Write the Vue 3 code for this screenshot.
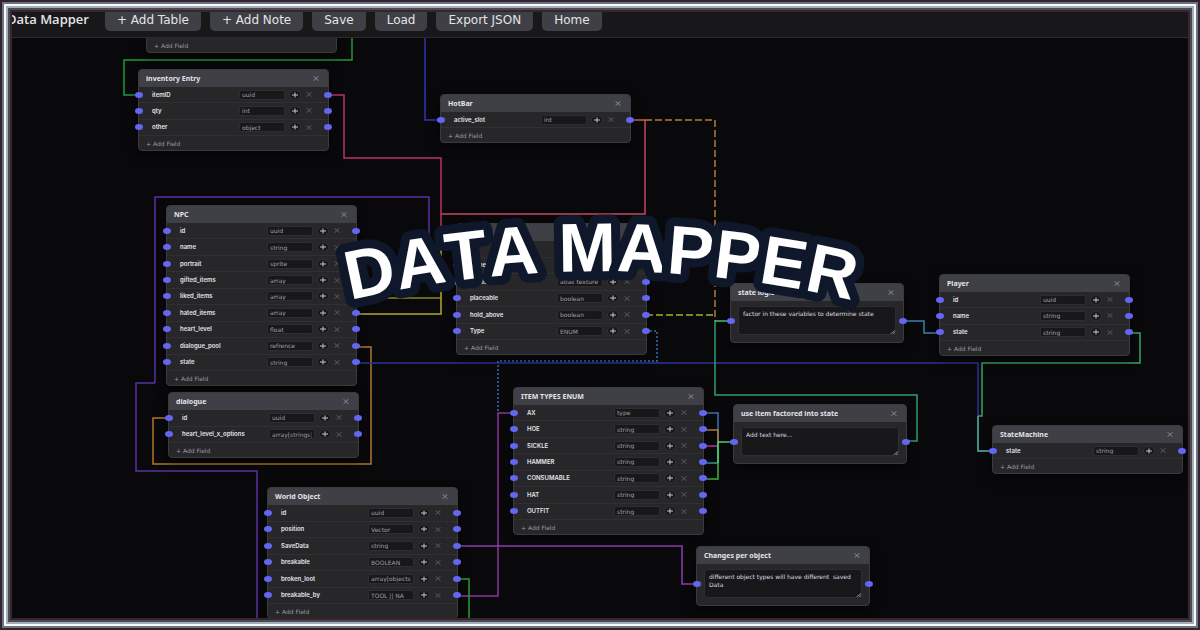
<script setup>
import { ref } from 'vue'

const actions = ['+ Add Table', '+ Add Note', 'Save', 'Load', 'Export JSON', 'Home']

const HEAD_AND_FOOT = 33
const ROW_PITCH = 16.5

const fields = (...pairs) => pairs.map(([name, type]) => ({ name, type }))

const tables = ref([
  { x: 146, y: 20, title: '', rows: [] },
  { x: 138, y: 69, title: 'inventory Entry', rows: fields(['itemID', 'uuid'], ['qty', 'int'], ['other', 'object']) },
  { x: 440, y: 94, title: 'HotBar', rows: fields(['active_slot', 'int']) },
  {
    x: 166, y: 205, title: 'NPC',
    rows: fields(
      ['id', 'uuid'], ['name', 'string'], ['portrait', 'sprite'], ['gifted_items', 'array'],
      ['liked_items', 'array'], ['hated_items', 'array'], ['heart_level', 'float'],
      ['dialogue_pool', 'refrence'], ['state', 'string']
    )
  },
  {
    x: 456, y: 223, title: '',
    rows: fields(['', ''], ['name', ''], ['sprite', 'atlas texture'], ['placeable', 'boolean'], ['hold_above', 'boolean'], ['Type', 'ENUM'])
  },
  { x: 939, y: 274, title: 'Player', rows: fields(['id', 'uuid'], ['name', 'string'], ['state', 'string']) },
  { x: 168, y: 392, title: 'dialogue', rows: fields(['id', 'uuid'], ['heart_level_x_options', 'array[strings]']) },
  {
    x: 513, y: 387, title: 'ITEM TYPES ENUM',
    rows: fields(
      ['AX', 'type'], ['HOE', 'string'], ['SICKLE', 'string'], ['HAMMER', 'string'],
      ['CONSUMABLE', 'string'], ['HAT', 'string'], ['OUTFIT', 'string']
    )
  },
  { x: 992, y: 425, title: 'StateMachine', rows: fields(['state', 'string']) },
  {
    x: 267, y: 487, title: 'World Object',
    rows: fields(
      ['id', 'uuid'], ['position', 'Vector'], ['SaveData', 'string'],
      ['breakable', 'BOOLEAN'], ['broken_loot', 'array[objects]'], ['breakable_by', 'TOOL || NA']
    )
  }
])

const notes = ref([
  { x: 730, y: 283, title: 'state logic', text: 'factor in these variables to determine state' },
  { x: 733, y: 404, title: 'use item factored into state', text: 'Add text here...' },
  { x: 696, y: 546, title: 'Changes per object', text: 'different object types will have different  saved Data' }
])

const wires = [
  { d: 'M352 30V60H124V95H138', c: '#22963a' },
  { d: 'M425 30V120H440', c: '#3234b0' },
  { d: 'M155 383V197H429V249H456', c: '#5a30a4' },
  { d: 'M155 383H136V471H257V640', c: '#5a30a4' },
  { d: 'M355 298H441', c: '#85862a' },
  { d: 'M355 314H441V249H456', c: '#b3a936' },
  { d: 'M328 95H344V158H441V249', c: '#b83564' },
  { d: 'M441 214H645V120', c: '#c04860' },
  { d: 'M630 120H645', c: '#b86a3c' },
  { d: 'M645 120H715V321', c: '#b37a3c', dash: '7 3' },
  { d: 'M646 315H715', c: '#a8b030', dash: '7 3' },
  { d: 'M355 347H371V464H153V418H168', c: '#b0762e' },
  { d: 'M355 363H978V451H993', c: '#2e309a' },
  { d: 'M646 331H657V361H498V413', c: '#3474b4', dash: '2 2' },
  { d: 'M513 413H498V596H457', c: '#86389c' },
  { d: 'M457 546H682V584H696', c: '#8f3cb0' },
  { d: 'M457 579H469V640', c: '#2f9a38' },
  { d: 'M906 441H917V395H715V321', c: '#2f9d72' },
  { d: 'M715 321H730', c: '#4cc070' },
  { d: 'M904 321H924V333H939', c: '#4080ac' },
  { d: 'M1129 333H1140V363H982V416H978', c: '#38a262' },
  { d: 'M978 416V451H993', c: '#4cae8c' },
  { d: 'M703 413H718V442', c: '#3c72a8' },
  { d: 'M703 430H718V442', c: '#b07f34' },
  { d: 'M703 446H718', c: '#c032a0' },
  { d: 'M703 463H718', c: '#2f9a94' },
  { d: 'M703 479H718V442', c: '#3fae44' },
  { d: 'M718 463V442H733', c: '#4fd07a' }
]

const at = (item) => ({ left: item.x + 'px', top: item.y + 'px' })
const tableBox = (t) => ({ ...at(t), height: Math.floor(HEAD_AND_FOOT + t.rows.length * ROW_PITCH) + 'px' })
</script>

<template>
  <main class="app">
    <header class="toolbar">
      <h1 class="brand">Data Mapper</h1>
      <button v-for="a in actions" :key="a" type="button" class="action">{{ a }}</button>
    </header>

    <section class="board">
      <div class="world">
        <svg class="wires" aria-hidden="true">
          <path v-for="(w, i) in wires" :key="i" :d="w.d" :stroke="w.c" :stroke-dasharray="w.dash" />
        </svg>

        <article v-for="(t, ti) in tables" :key="'t' + ti" class="card table" :style="tableBox(t)">
          <div class="head">
            <h2>{{ t.title }}</h2>
            <button type="button" class="cross" aria-label="Delete table">
              <svg viewBox="0 0 6 5"><path d="M.5 .3L5.5 4.7M5.5 .3L.5 4.7" /></svg>
            </button>
          </div>
          <div v-for="(r, ri) in t.rows" :key="ri" class="row">
            <i class="port in"></i>
            <label class="name" :for="`f-${ti}-${ri}`">{{ r.name }}</label>
            <input :id="`f-${ti}-${ri}`" v-model="r.type" class="type" type="text" />
            <button type="button" class="plus" aria-label="Add connection">
              <svg viewBox="0 0 6 6"><path d="M0 3H6M3 .4V5.6" /></svg>
            </button>
            <button type="button" class="cross dim" aria-label="Remove field">
              <svg viewBox="0 0 6 5"><path d="M.5 .3L5.5 4.7M5.5 .3L.5 4.7" /></svg>
            </button>
            <i class="port out"></i>
          </div>
          <button type="button" class="add">+ Add Field</button>
        </article>

        <article v-for="(n, ni) in notes" :key="'n' + ni" class="card note" :style="at(n)">
          <div class="head">
            <h2>{{ n.title }}</h2>
            <button type="button" class="cross" aria-label="Delete note">
              <svg viewBox="0 0 6 5"><path d="M.5 .3L5.5 4.7M5.5 .3L.5 4.7" /></svg>
            </button>
          </div>
          <div class="body">
            <textarea v-model="n.text" :aria-label="n.title"></textarea>
            <svg class="grip" viewBox="0 0 5 4" aria-hidden="true"><path d="M.5 4L5 .5M3 4L5 2.5" /></svg>
          </div>
          <i class="port in"></i>
          <i class="port out"></i>
        </article>
      </div>
    </section>

    <svg class="banner" viewBox="0 0 1200 630">
      <path id="arc" d="M301 313A1100 1100 0 0 1 901 313" fill="none" />
      <text text-anchor="middle"><textPath href="#arc" startOffset="50%">DATA MAPPER</textPath></text>
    </svg>
    <div class="frame"></div>
  </main>
</template>

<style>
body {
  margin: 0;
  background: #09090b;
}
</style>

<style scoped>
.app {
  position: relative;
  display: flex;
  flex-direction: column;
  height: 100vh;
  overflow: hidden;
  background: #09090b;
  color: #e4e4e7;
  font-family: "DejaVu Sans", sans-serif;
}

button,
input,
textarea {
  box-sizing: border-box;
  margin: 0;
  padding: 0;
  border: 0;
  outline: 0;
  background: none;
  color: inherit;
  font: inherit;
}

h1,
h2 {
  margin: 0;
}

.toolbar {
  display: flex;
  align-items: center;
  gap: 9px;
  padding: 8px 8px 6px 7px;
  border-bottom: 1px solid #2b2b2e;
  background: #18181b;
}

.brand {
  margin-right: 7px;
  font-family: "Open Sans", "Noto Sans", sans-serif;
  font-size: 13px;
  font-weight: 600;
  line-height: 23px;
  white-space: nowrap;
}

.action {
  padding: 2px 12px 0;
  border-radius: 5px;
  background: #3f3f46;
  font-size: 12px;
  line-height: 21px;
  white-space: nowrap;
}

.board {
  position: relative;
  flex: 1;
  overflow: hidden;
}

.world {
  position: absolute;
  inset: -38px 0 0;
}

.wires {
  position: absolute;
  inset: 0;
  width: 100%;
  height: 100%;
  fill: none;
  stroke-width: 1.5;
}

.card {
  position: absolute;
  display: flex;
  flex-direction: column;
  box-sizing: border-box;
  border: 1px solid #3a3a3f;
  border-radius: 4px;
  background: #27272a;
  box-shadow: 0 4px 10px #00000080;
  font-size: 6px;
}

.table {
  width: 191px;
}

.note {
  width: 174px;
}

.head {
  display: flex;
  align-items: center;
  justify-content: space-between;
  flex: none;
  height: 17px;
  padding: 0 9px 0 7px;
  border-radius: 3px 3px 0 0;
  background: #3f3f46;
}

.head h2 {
  font-family: "Noto Sans", sans-serif;
  font-size: 7px;
  font-weight: 700;
  line-height: 16px;
  white-space: nowrap;
}

.cross {
  display: flex;
  justify-content: flex-end;
  stroke: #8b8b93;
}

.cross svg {
  flex: none;
  width: 6px;
  height: 5px;
}

.cross path,
.plus path {
  fill: none;
  stroke-width: 1;
}

.dim {
  stroke: #5c5c63;
}

.row {
  position: relative;
  display: grid;
  grid-template-columns: 87px 46px 16px 5px 6px;
  align-items: center;
  flex: 1;
  min-height: 0;
  box-sizing: border-box;
  padding-left: 13px;
  border-bottom: 1px solid #303034;
}

.row .plus {
  justify-self: end;
}

.row .dim {
  grid-column: 5;
}

.name {
  font-family: Inter, sans-serif;
  font-weight: 600;
  font-size: 6px;
  line-height: 10px;
  white-space: nowrap;
}

.type {
  width: 100%;
  height: 10px;
  padding: 0 2px;
  border: 1px solid #2e2e32;
  border-radius: 2px;
  background: #18181b;
  color: #a1a1aa;
  line-height: 8px;
}

.plus {
  display: flex;
  align-items: center;
  justify-content: center;
  width: 12px;
  height: 10px;
  border: 1px solid #303034;
  border-radius: 50%;
  background: #18181b;
  stroke: #c4c4ca;
}

.plus svg {
  width: 6px;
  height: 6px;
  flex: none;
}

.port {
  position: absolute;
  top: 50%;
  width: 8px;
  height: 6px;
  margin-top: -3px;
  border-radius: 50%;
  background: #6366f1;
}

.in {
  left: -4px;
}

.out {
  right: -4px;
}

.note .port {
  margin-top: 5px;
}

.add {
  flex: none;
  height: 14px;
  padding: 1px 0 0 7px;
  color: #9a9aa2;
  line-height: 13px;
  text-align: left;
}

.body {
  position: relative;
  padding: 5px 7px 7px;
}

textarea {
  display: block;
  width: 100%;
  height: 29px;
  padding: 3px 4px;
  border: 1px solid #2e2e32;
  border-radius: 3px;
  background: #18181b;
  color: #dcdce0;
  line-height: 8px;
  resize: none;
  overflow: hidden;
}

.grip {
  position: absolute;
  right: 8px;
  bottom: 8px;
  width: 5px;
  height: 4px;
  fill: none;
  stroke: #8b8b93;
}

.banner {
  position: absolute;
  inset: 0;
  width: 100%;
  height: 100%;
  pointer-events: none;
}

.banner text {
  fill: #fff;
  stroke: #0f172a;
  stroke-width: 18px;
  stroke-linejoin: round;
  paint-order: stroke;
  font-family: "Liberation Sans", Arial, sans-serif;
  font-size: 69px;
  font-weight: 700;
  font-kerning: none;
}

.frame {
  position: absolute;
  inset: 0;
  pointer-events: none;
  box-shadow:
    inset 0 0 0 2px #2f242e,
    inset 0 0 0 4px #6b7280,
    inset 0 0 0 6px #f8fafc,
    inset 0 0 0 8px #a3aebb,
    inset 0 0 0 10px #4c4a50,
    inset 0 0 0 12px #33262f;
}
</style>
